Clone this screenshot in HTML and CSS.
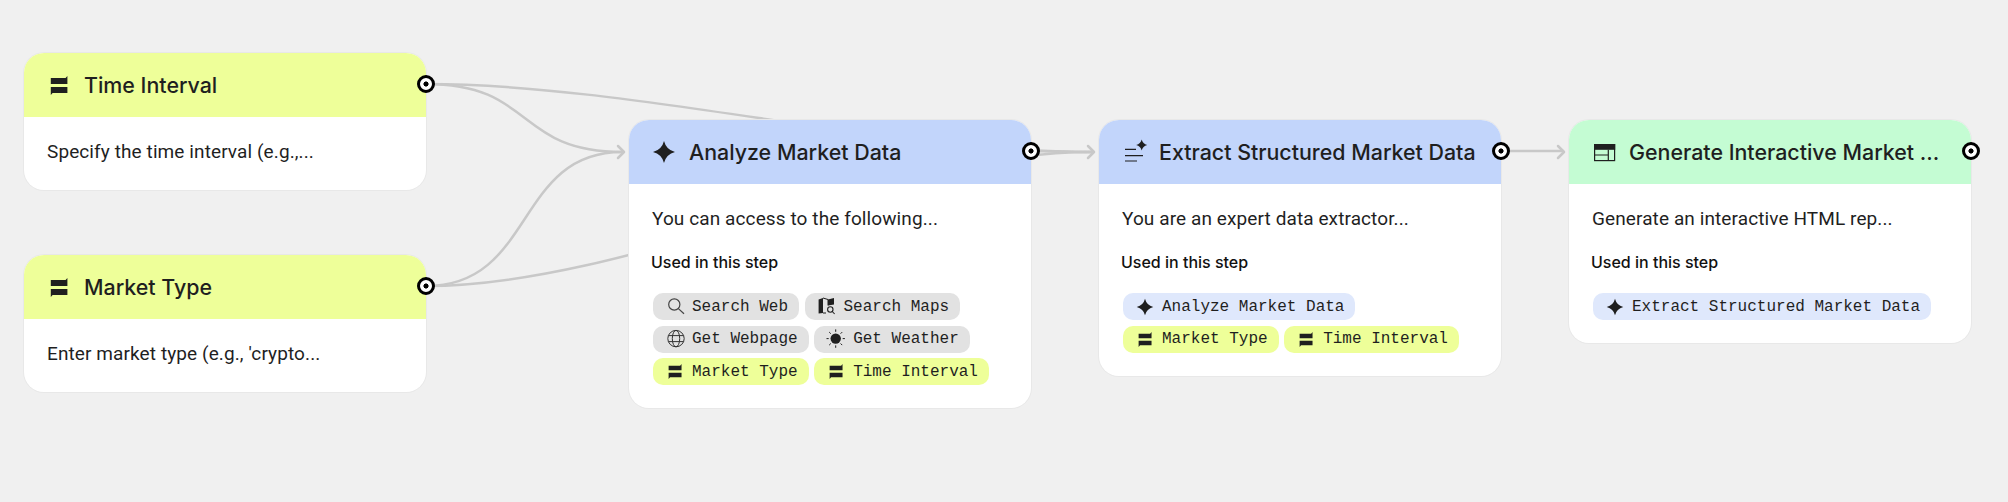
FILE: index.html
```html
<!DOCTYPE html>
<html lang="en">
<head>
<meta charset="utf-8">
<title>Market Analysis Workflow</title>
<link rel="stylesheet" href="styles.css">
</head>
<body>
<svg width="0" height="0" class="defs">
  <defs>
    <symbol id="i-input" viewBox="0 0 18 19"><path d="M0.8 2 H15.6 L17.4 0 V8 H0.8 Z M0.8 11 H17.4 V17 H2.6 L0.8 19 Z" fill="#1f1f1f"/></symbol>
    <symbol id="i-spark" viewBox="0 0 24 24"><path d="M12 1 Q14.2 9.8 23 12 Q14.2 14.2 12 23 Q9.8 14.2 1 12 Q9.8 9.8 12 1 Z" fill="#1f1f1f"/></symbol>
  </defs>
</svg>
<main class="canvas">
  <svg class="edges" width="2008" height="502" viewBox="0 0 2008 502" fill="none">
    <g stroke="#c8c8c8" stroke-width="2.5" stroke-linecap="round" stroke-linejoin="round">
      <path d="M426 84 C535 84 515 152 622 152"/>
      <path d="M426 286 C535 286 515 152 622 152"/>
      <path d="M426 84 C630 84 888 152 1092 152"/>
      <path d="M426 286 C630 286 888 152 1092 152"/>
      <path d="M1030 151 C1060 151 1060 152 1092 152"/>
      <path d="M1501 151 H1563"/>
      <path d="M618 146 L624 152 L618 158"/>
      <path d="M1088 146 L1094 152 L1088 158"/>
      <path d="M1558 146 L1564 152 L1558 158"/>
    </g>
  </svg>

  <article class="node n1">
    <header class="head lime"><svg class="hicon small"><use href="#i-input"/></svg><h2>Time Interval</h2></header>
    <p class="desc">Specify the time interval (e.g.,...</p>
    <span class="port"></span>
  </article>

  <article class="node n2">
    <header class="head lime"><svg class="hicon small"><use href="#i-input"/></svg><h2>Market Type</h2></header>
    <p class="desc">Enter market type (e.g., 'crypto...</p>
    <span class="port"></span>
  </article>

  <article class="node n3">
    <header class="head blue"><svg class="hicon"><use href="#i-spark"/></svg><h2>Analyze Market Data</h2></header>
    <p class="desc">You can access to the following...</p>
    <h3>Used in this step</h3>
    <div class="chips">
      <span class="chip grey"><svg class="cicon" viewBox="0 0 18 18" fill="none" stroke="#444" stroke-width="1.2"><circle cx="8.3" cy="6.5" r="5.6"/><path d="M12.4 10.6 L18 15.8"/></svg>Search Web</span>
      <span class="chip grey"><svg class="cicon" viewBox="0 0 18 18"><path d="M0.6 1.5 L5 0 V15 L0.6 15.5 Z" fill="#1f1f1f"/><path d="M5 0 L10 1.5 V7.5 M5 15 L8 15" fill="none" stroke="#1f1f1f" stroke-width="1"/><path d="M10 1.5 L16 0 V6.5 L10 7.5 Z" fill="#1f1f1f"/><circle cx="12.3" cy="11.5" r="2.7" fill="none" stroke="#1f1f1f" stroke-width="1.1"/><path d="M14.3 13.5 L16.6 16" stroke="#1f1f1f" stroke-width="1.1"/></svg>Search Maps</span>
      <span class="chip grey"><svg class="cicon" viewBox="0 0 18 18" fill="none" stroke="#333" stroke-width="1"><circle cx="10" cy="8.6" r="8.2"/><ellipse cx="10" cy="8.6" rx="3.7" ry="8.2"/><path d="M2.4 5.6 H17.6 M2.4 11.6 H17.6"/></svg>Get Webpage</span>
      <span class="chip grey"><svg class="cicon" viewBox="0 0 18 18" fill="none" stroke="#1f1f1f" stroke-width="1"><circle cx="8.7" cy="8.6" r="5.2" fill="#1f1f1f" stroke="none"/><path d="M8.7 -0.6 V1.8 M8.7 15.4 V17.8 M-0.5 8.6 H1.7 M15.7 8.6 H17.9 M2.2 2.1 L3.8 3.7 M13.6 13.5 L15.2 15.1 M15.2 2.1 L13.6 3.7 M3.8 13.5 L2.2 15.1"/></svg>Get Weather</span>
      <span class="chip lime"><svg class="cicon in"><use href="#i-input"/></svg>Market Type</span>
      <span class="chip lime"><svg class="cicon in"><use href="#i-input"/></svg>Time Interval</span>
    </div>
    <span class="port"></span>
  </article>

  <article class="node n4">
    <header class="head blue"><svg class="hicon" viewBox="0 0 24 24" fill="none"><path d="M3 9.3 H14 M3 15.7 H21 M3 21 H15" stroke="#1f1f1f" stroke-width="1.2"/><path d="M19.7 -0.5 Q20.8 3.9 25.2 5 Q20.8 6.1 19.7 10.5 Q18.6 6.1 14.2 5 Q18.6 3.9 19.7 -0.5 Z" fill="#1f1f1f"/></svg><h2>Extract Structured Market Data</h2></header>
    <p class="desc">You are an expert data extractor...</p>
    <h3>Used in this step</h3>
    <div class="chips">
      <span class="chip sky"><svg class="cicon sp"><use href="#i-spark"/></svg>Analyze Market Data</span>
      <span class="chip lime"><svg class="cicon in"><use href="#i-input"/></svg>Market Type</span>
      <span class="chip lime"><svg class="cicon in"><use href="#i-input"/></svg>Time Interval</span>
    </div>
    <span class="port"></span>
  </article>

  <article class="node n5">
    <header class="head green"><svg class="hicon" viewBox="0 0 24 24" fill="none"><rect x="2.6" y="4.6" width="20" height="16" stroke="#1f1f1f" stroke-width="1.2"/><rect x="2" y="4" width="21.2" height="5.8" fill="#1f1f1f"/><path d="M2.6 15 H16.3 M16.3 9.8 V20.6" stroke="#1f1f1f" stroke-width="1.2"/></svg><h2>Generate Interactive Market ...</h2></header>
    <p class="desc">Generate an interactive HTML rep...</p>
    <h3>Used in this step</h3>
    <div class="chips">
      <span class="chip sky"><svg class="cicon sp"><use href="#i-spark"/></svg>Extract Structured Market Data</span>
    </div>
    <span class="port"></span>
  </article>
</main>
</body>
</html>
```
FILE: styles.css
```css
* { box-sizing: border-box; }
html, body { margin: 0; padding: 0; }
body { background: #f0f0f0; font-family: "Roboto", "Liberation Sans", sans-serif; color: #1f1f1f; width: 2008px; height: 502px; overflow: hidden; }
.defs { position: absolute; }
.canvas { position: relative; width: 2008px; height: 502px; }
.edges { position: absolute; left: 0; top: 0; }

.node { position: absolute; width: 402px; background: #fff; border-radius: 20px; box-shadow: 0 0 0 1px #e8e8e8; display: flex; flex-direction: column; }
.n1 { left: 24px; top: 53px; height: 137px; }
.n2 { left: 24px; top: 255px; height: 137px; }
.n3 { left: 629px; top: 120px; height: 288px; }
.n4 { left: 1099px; top: 120px; height: 256px; }
.n5 { left: 1569px; top: 120px; height: 223px; }

.head { height: 64px; flex: none; display: flex; align-items: center; padding-left: 23px; gap: 13px; border-radius: 20px 20px 0 0; }
.head.lime { background: #eeff99; }
.head.blue { background: #c2d5fb; }
.head.green { background: #c4fcd3; }
.hicon { width: 24px; height: 24px; flex: none; overflow: visible; }
.hicon.small { width: 18px; height: 19px; margin: 1px 3px 0; }
h2 { margin: 0; font-family: "Inter", sans-serif; font-size: 21.4px; font-weight: 500; letter-spacing: 0; white-space: nowrap; }
.desc { margin: 0; padding: 23px 23px 0; font-size: 19px; line-height: 24px; font-weight: 400; letter-spacing: 0.1px; }
h3 { margin: 0; padding: 21px 22px 0; font-family: "Inter", sans-serif; font-size: 16px; line-height: 20px; font-weight: 500; color: #111; }
.chips { display: flex; flex-wrap: wrap; gap: 5.5px; padding: 21px 23px 0 24px; align-content: flex-start; }
.chip { height: 27px; display: inline-flex; align-items: center; padding: 0 11px 0 13px; border-radius: 10px; font-family: "Liberation Mono", monospace; font-size: 16px; white-space: nowrap; }
.chip.grey { background: #e2e2e2; }
.chip.lime { background: #eeff99; }
.chip.sky { background: #dfe8fc; }
.cicon { width: 18px; height: 18px; margin-right: 8px; flex: none; overflow: visible; }
.cicon.in { width: 14px; height: 15px; margin: 0 10px 0 2px; }
.cicon.sp { width: 18px; height: 18px; margin-right: 8px; }
.port { position: absolute; right: -9px; top: 22px; width: 18px; height: 18px; border-radius: 50%; border: 3px solid #000; background: radial-gradient(circle, #000 0 2.3px, #fff 2.8px); }
```
